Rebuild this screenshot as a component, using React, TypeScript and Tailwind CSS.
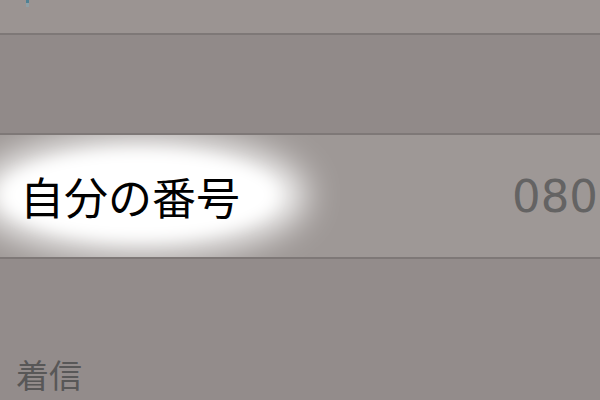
import React from "react";

export default function App() {
  return (
    <div
      className="relative w-[600px] h-[400px] overflow-hidden bg-[#948d8c] flex flex-col"
      style={{ fontFamily: '"Noto Sans CJK JP", "Noto Sans", sans-serif' }}
    >
      {/* top row */}
      <div className="relative h-[35px] bg-[#9b9492] border-b-2 border-[#7e7877] shrink-0">
        <div className="absolute left-[26px] top-0 w-[3px] h-[3px] bg-[#4f8194]" />
        <div className="absolute left-[26px] top-[3px] w-[3px] h-[4px] bg-[#8fa0a6]" />
      </div>
      {/* spacer band */}
      <div className="h-[98px] bg-[#918a89] shrink-0" />
      {/* my number row */}
      <div className="relative h-[126px] shrink-0 bg-[#9e9896] border-t-2 border-b-2 border-[#7e7877] flex items-center justify-between overflow-hidden">
        <div className="absolute left-[-24px] top-[2px] w-[330px] h-[116px] rounded-[50%] bg-white blur-[18px]" />
        <div className="absolute left-[4px] top-[18px] w-[270px] h-[84px] rounded-[50%] bg-white blur-[8px]" />
        <span className="relative pl-[20px] text-[44px] leading-none text-black whitespace-nowrap">
          自分の番号
        </span>
        <span
          className="relative pr-[2px] text-[45px] leading-none text-[#646363] whitespace-nowrap"
          style={{ fontFamily: '"DejaVu Sans", sans-serif' }}
        >
          080
        </span>
      </div>
      {/* section header */}
      <div className="flex-1 bg-[#938c8b] flex items-end pl-[16px] pb-[5px]">
        <span className="text-[33px] leading-tight text-[#585757]">着信</span>
      </div>
    </div>
  );
}
